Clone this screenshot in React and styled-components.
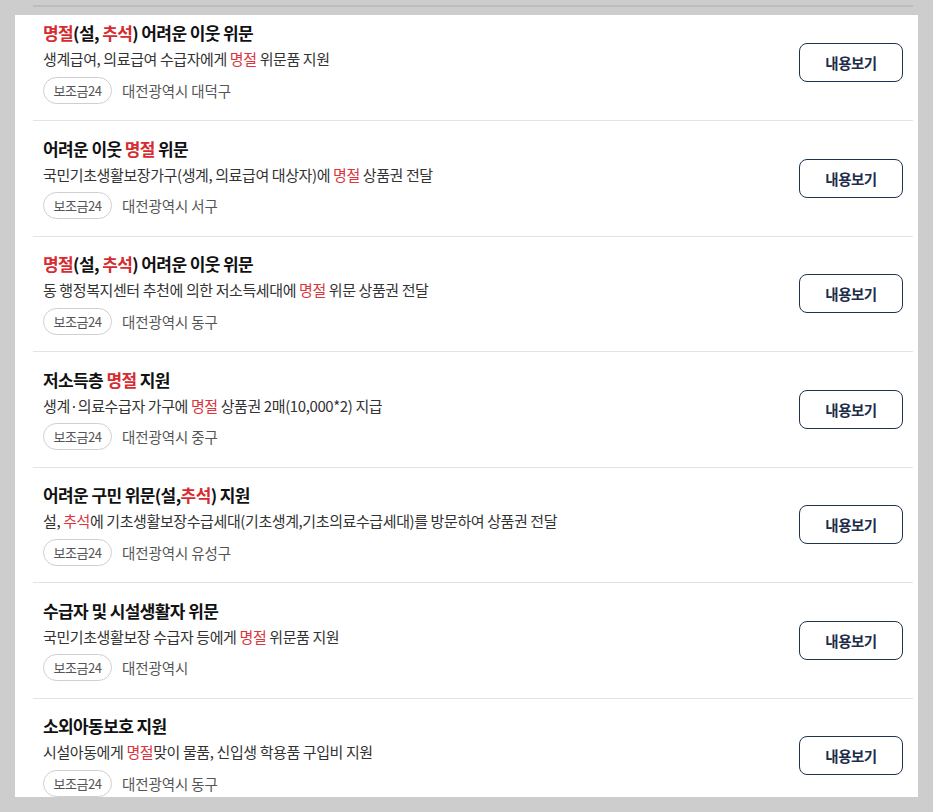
import React from "react";
import styled, { createGlobalStyle } from "styled-components";

const Global = createGlobalStyle`
  html, body { margin: 0; padding: 0; background: #cdcdcd; }
  body { font-family: "Noto Sans CJK KR", "Noto Sans", sans-serif; }
`;

const Page = styled.div`
  width: 933px;
  height: 812px;
  padding-top: 5px;
  box-sizing: border-box;
  background: #cdcdcd;
  overflow: hidden;
`;

const TopRule = styled.div`
  height: 2px;
  margin: 0 20px 0 33px;
  background: #bdbdbd;
`;

const Panel = styled.div`
  margin: 8px 15px 0 15px;
  height: 782px;
  background: #ffffff;
  overflow: hidden;
`;

const List = styled.ul`
  list-style: none;
  margin: -9.5px 5px 0 18px;
  padding: 0;
`;

const Item = styled.li`
  height: 115.5px;
  box-sizing: border-box;
  border-bottom: 1px solid #e3e3e3;
  padding: 0 10px;
  display: flex;
  align-items: center;
  justify-content: space-between;
`;

const Info = styled.div`
  display: flex;
  flex-direction: column;
`;

const Title = styled.h3`
  margin: 0;
  font-size: 17px;
  line-height: 22px;
  font-weight: 700;
  color: #111;
  letter-spacing: -0.6px;
`;

const Desc = styled.p`
  margin: 4px 0 0;
  font-size: 15px;
  line-height: 22px;
  font-weight: 400;
  color: #333;
  letter-spacing: -0.4px;
`;

const Mark = styled.span`
  color: ${(p) => (p.$strong ? "#d62b30" : "#d9363e")};
`;

const Meta = styled.div`
  margin-top: 6.5px;
  display: flex;
  align-items: center;
  gap: 10px;
`;

const Tag = styled.span`
  display: inline-flex;
  align-items: center;
  justify-content: center;
  height: 27px;
  width: 69px;
  box-sizing: border-box;
  border: 1px solid #cfcfcf;
  border-radius: 14px;
  font-size: 13px;
  color: #555;
  letter-spacing: -0.5px;
`;

const Region = styled.span`
  font-size: 14.5px;
  color: #555;
  letter-spacing: -0.1px;
`;

const ViewButton = styled.button`
  width: 104px;
  height: 39px;
  box-sizing: border-box;
  border: 1.5px solid #1f3350;
  border-radius: 8px;
  background: #fff;
  color: #1d2d4a;
  font-family: inherit;
  font-size: 14.5px;
  font-weight: 700;
  letter-spacing: -0.5px;
  cursor: pointer;
  flex-shrink: 0;
`;

const items = [
  {
    title: "{명절}(설, {추석}) 어려운 이웃 위문",
    desc: "생계급여, 의료급여 수급자에게 {명절} 위문품 지원",
    region: "대전광역시 대덕구",
  },
  {
    title: "어려운 이웃 {명절} 위문",
    desc: "국민기초생활보장가구(생계, 의료급여 대상자)에 {명절} 상품권 전달",
    region: "대전광역시 서구",
  },
  {
    title: "{명절}(설, {추석}) 어려운 이웃 위문",
    desc: "동 행정복지센터 추천에 의한 저소득세대에 {명절} 위문 상품권 전달",
    region: "대전광역시 동구",
  },
  {
    title: "저소득층 {명절} 지원",
    desc: "생계·의료수급자 가구에 {명절} 상품권 2매(10,000*2) 지급",
    region: "대전광역시 중구",
  },
  {
    title: "어려운 구민 위문(설,{추석}) 지원",
    desc: "설, {추석}에 기초생활보장수급세대(기초생계,기초의료수급세대)를 방문하여 상품권 전달",
    region: "대전광역시 유성구",
  },
  {
    title: "수급자 및 시설생활자 위문",
    desc: "국민기초생활보장 수급자 등에게 {명절} 위문품 지원",
    region: "대전광역시",
  },
  {
    title: "소외아동보호 지원",
    desc: "시설아동에게 {명절}맞이 물품, 신입생 학용품 구입비 지원",
    region: "대전광역시 동구",
  },
];

function Highlight({ text, strong }) {
  const parts = text.split(/(\{[^}]+\})/g).filter(Boolean);
  return parts.map((p, i) =>
    p.startsWith("{") ? (
      <Mark key={i} $strong={strong}>
        {p.slice(1, -1)}
      </Mark>
    ) : (
      <React.Fragment key={i}>{p}</React.Fragment>
    )
  );
}

export default function App() {
  return (
    <>
      <Global />
      <Page>
        <TopRule />
        <Panel>
          <List>
            {items.map((it, i) => (
              <Item key={i}>
                <Info>
                  <Title>
                    <Highlight text={it.title} strong />
                  </Title>
                  <Desc>
                    <Highlight text={it.desc} />
                  </Desc>
                  <Meta>
                    <Tag>보조금24</Tag>
                    <Region>{it.region}</Region>
                  </Meta>
                </Info>
                <ViewButton>내용보기</ViewButton>
              </Item>
            ))}
          </List>
        </Panel>
      </Page>
    </>
  );
}
